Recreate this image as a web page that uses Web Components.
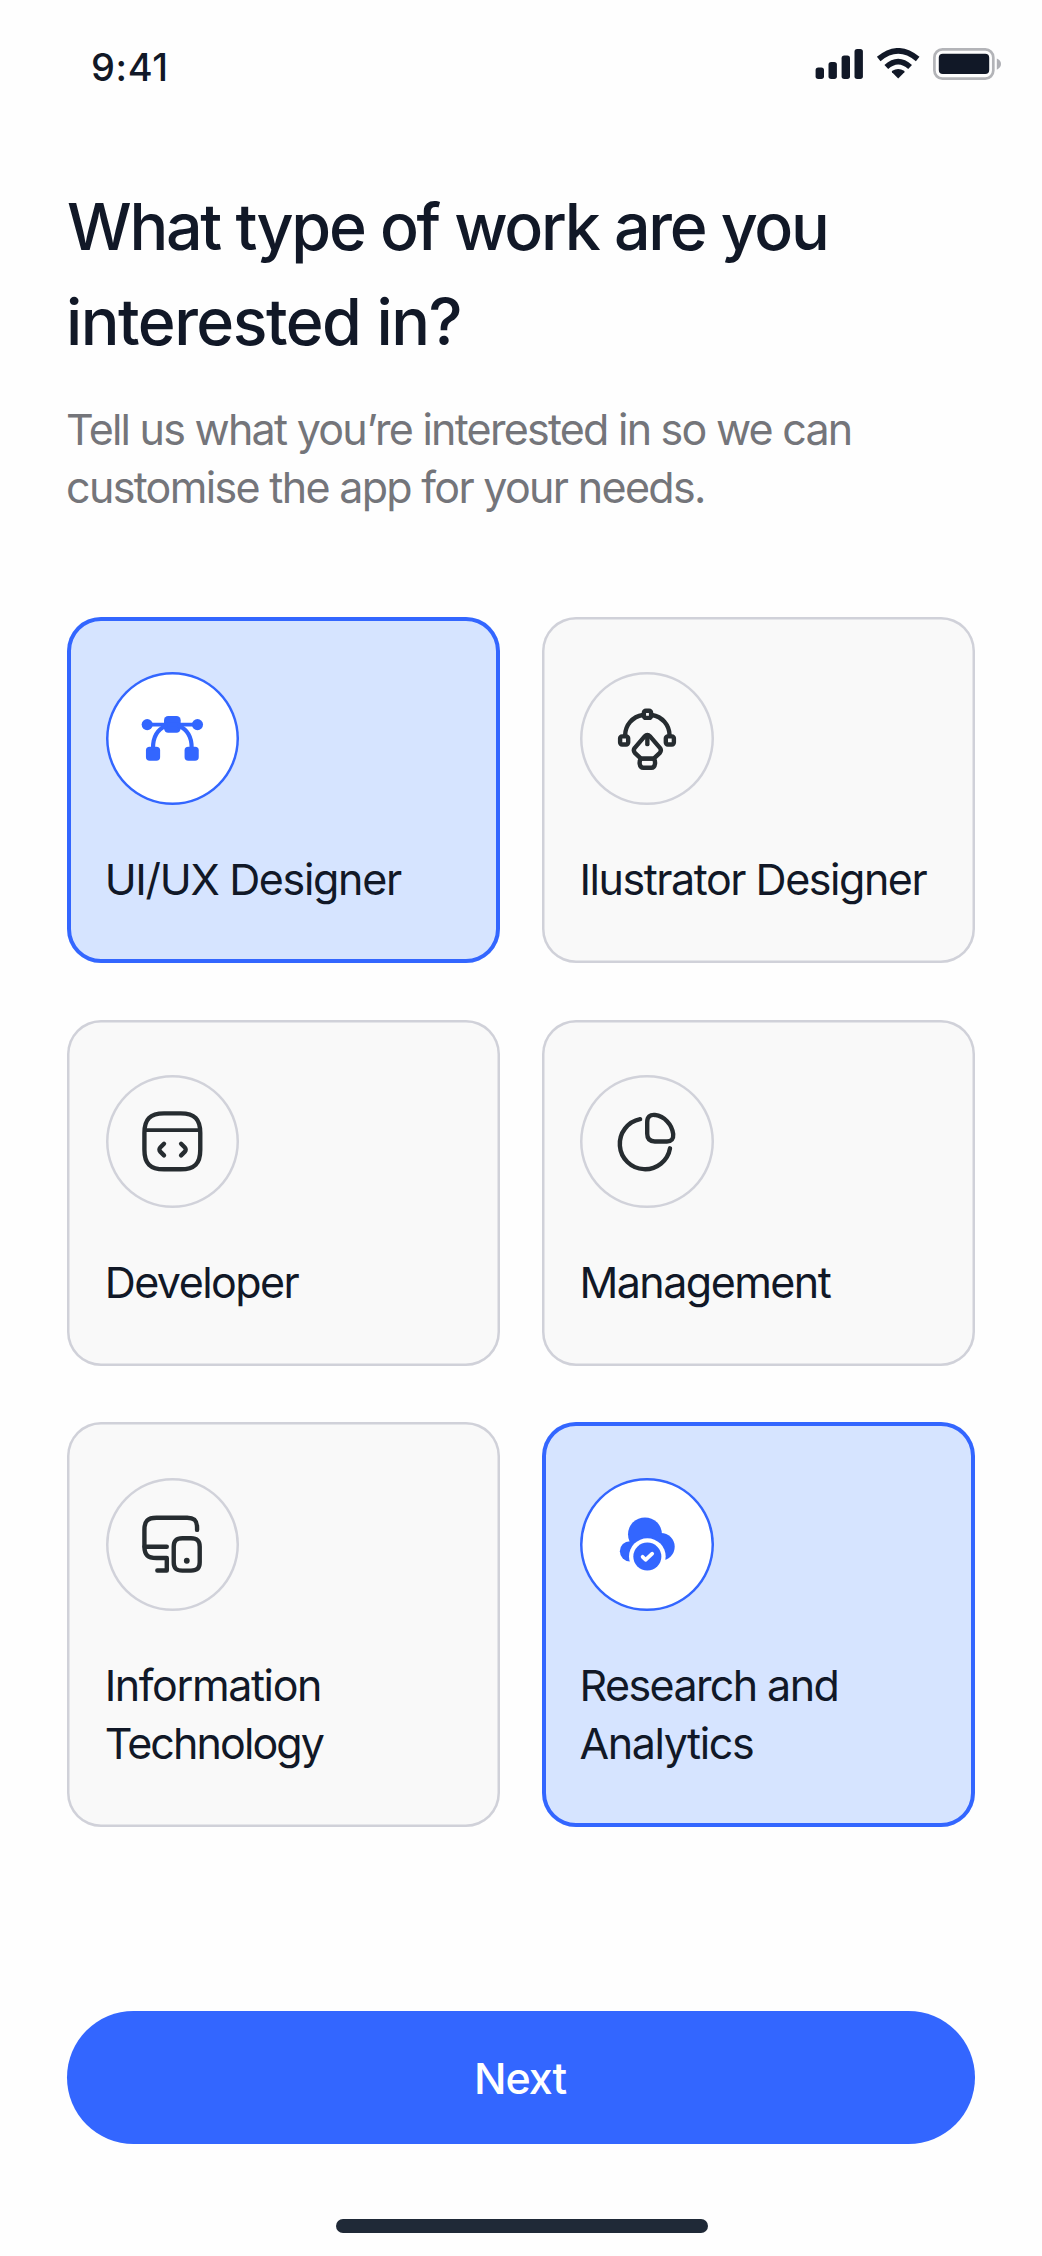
<!DOCTYPE html>
<html lang="en">
<head>
<meta charset="utf-8">
<title>Choose your interests</title>
<style>
  html, body { margin: 0; background: #fefefe; }
  body { font-family: Inter, "Liberation Sans", sans-serif; color: #111827; width: 1042px; }
</style>
</head>
<body>
<interest-screen></interest-screen>

<script>
const define = (name, markup, setup) => {
  const template = document.createElement('template');
  template.innerHTML = markup;
  customElements.define(name, class extends HTMLElement {
    constructor() {
      super();
      this.attachShadow({ mode: 'open' }).append(template.content.cloneNode(true));
    }
    connectedCallback() { if (setup) setup(this, this.shadowRoot); }
  });
};

/* Icons on a 24-unit grid */
const ICONS = {
  bezier: `<g fill="currentColor" stroke="none">
      <rect x="9" y="4" width="6" height="6" rx="1.5"/>
      <circle cx="2.95" cy="7.05" r="2"/><circle cx="21.05" cy="7.05" r="2"/>
      <rect x="2.5" y="15" width="5.1" height="5.1" rx="1.35"/>
      <rect x="16.4" y="15" width="5.1" height="5.1" rx="1.35"/></g>
    <path d="M3 7.05h18" stroke-width="1.4"/>
    <path d="M5.05 15.5C5 11.8 6.3 9 9.6 7.5M18.95 15.5C19 11.8 17.7 9 14.4 7.5" stroke-width="1.5"/>`,
  pen: `<rect x="10.75" y="2.05" width="2.6" height="2.6" rx=".7"/>
    <rect x="2.2" y="11.3" width="2.9" height="2.9" rx=".7"/>
    <rect x="18.65" y="11.3" width="2.9" height="2.9" rx=".7"/>
    <path d="M10.4 3.6C6.6 4.2 4.1 7.2 4 10.9M13.6 3.6c3.8.6 6.3 3.6 6.4 7.3"/>
    <path d="M9.7 19.3 7.5 17.2c-.5-.6-.5-1.1-.1-1.7l3.7-4.3c.55-.6 1.25-.6 1.8 0l3.7 4.3c.4.6.4 1.1-.1 1.7l-2.2 2.1z"/>
    <path d="M9.7 19.3h4.6c.45.6.55 1.2.45 1.9-.15 1-.5 1.4-1.3 1.4h-2.9c-.8 0-1.15-.4-1.3-1.4-.1-.7 0-1.3.45-1.9z"/>
    <path d="M12 11.3v2.8"/>`,
  code: `<path d="M9 22.05h6c5 0 7.05-2.05 7.05-7.05V9c0-5-2.05-7.05-7.05-7.05H9C4 1.95 1.95 4 1.95 9v6c0 5 2.05 7.05 7.05 7.05z"/>
    <path d="M2.1 7.95h19.8" stroke-width="1.4"/>
    <path d="m9 12.85-1.35 1.35c-.4.4-.4 1.1 0 1.5L9 17.05M15.15 12.85l1.35 1.35c.4.4.4 1.1 0 1.5l-1.35 1.35"/>`,
  chart: `<path d="M11.95 5.1c0-1.95 1-2.75 2.75-2.6 3.5.5 6.2 3.4 6.6 6.9.15 1.8-.65 2.65-2.25 2.65H14.7c-1.85 0-2.75-.9-2.75-2.75z"/>
    <path d="M9.4 4a9.1 9.1 0 1 0 10.75 10.5"/>`,
  devices: `<path d="M20.9 6.8V6c0-2.6-1-3.55-3.55-3.55H6.3C3.1 2.45 1.95 3.6 1.95 6.8v5.8c0 3.2 1.15 4.3 4.35 4.3H10v4.5H6.6"/>
    <path d="M2 12.85h8"/>
    <path d="M15.6 21.45h3.1c2.2 0 3.15-.8 3.15-3v-5.6c0-2.2-.95-3.05-3.15-3.05h-3.1c-2.2 0-3.1.85-3.1 3.05v5.6c0 2.2.9 3 3.1 3z"/>
    <circle cx="17.2" cy="17.9" r="1.05" fill="currentColor" stroke="none"/>`,
  cloud: `<g fill="currentColor" stroke="none">
      <circle cx="11.15" cy="8.4" r="6.1"/><circle cx="5.75" cy="14.5" r="3.65"/><circle cx="16.9" cy="12.9" r="4.95"/></g>
    <circle cx="12" cy="16.4" r="6.6" fill="#fff" stroke="none"/>
    <circle cx="12" cy="16.4" r="5.05" fill="currentColor" stroke="none"/>
    <path d="m10.3 16.5 1.05 1.05 2.4-2.2" stroke="#fff" stroke-width="1.35"/>`
};

define('status-bar', `
  <style>
    :host { display: flex; justify-content: space-between; align-items: flex-start; padding: 43px 41px 0 91px; height: 52px; }
    time { font-size: 38px; line-height: 48px; font-weight: 500; letter-spacing: .6px; }
    svg { display: block; margin-top: 5px; }
  </style>
  <time>9:41</time>
  <svg width="186" height="32" viewBox="815 48 186 32">
    <g fill="#111827">
      <rect x="815.6" y="67.4" width="8.4" height="11.6" rx="2.7"/>
      <rect x="828.5" y="62" width="8.4" height="17" rx="2.7"/>
      <rect x="841.6" y="55.5" width="8.4" height="23.5" rx="2.7"/>
      <rect x="854.5" y="49" width="8.4" height="30" rx="2.7"/>
      <path d="M898.2 78.4 892 72.2Q891.4 71.4 892.3 70.8Q898.2 67 904.1 70.8Q905 71.4 904.4 72.2Z"/>
      <rect x="938.8" y="53.7" width="50.4" height="20.4" rx="4"/>
    </g>
    <path d="M886.3 67Q898.2 56.3 910.1 67" fill="none" stroke="#111827" stroke-width="5.6"/>
    <path d="M878.7 59Q898.2 42.7 917.7 59" fill="none" stroke="#111827" stroke-width="5.6"/>
    <rect x="934.4" y="49.4" width="58.9" height="29.2" rx="8" fill="none" stroke="#b3b4b8" stroke-width="2.7"/>
    <path d="M996.8 58.5q4.2 1.7 4.2 5.6t-4.2 5.6z" fill="#b0b1b6"/>
  </svg>`);

define('screen-heading', `
  <style>
    :host { display: flex; flex-direction: column; gap: 31px; }
    h1, p { margin: 0; white-space: nowrap; }
    h1 { font-size: 64.5px; line-height: 94.4px; font-weight: 500; letter-spacing: -2.25px; word-spacing: .4px; }
    h1 span + span { letter-spacing: -1.53px; margin-left: -1px; }
    p { font-size: 43px; line-height: 58.35px; color: #74757a; letter-spacing: -1.68px; margin-left: -1px; }
    p span:first-child { letter-spacing: -1.76px; }
    span { display: block; }
  </style>
  <h1><span>What type of work are you</span><span>interested in?</span></h1>
  <p><span>Tell us what you’re interested in so we can</span><span>customise the app for your needs.</span></p>`);

define('icon-badge', `
  <style>
    :host { display: grid; place-items: center; width: 133.4px; height: 133.4px;
      border-radius: 50%; box-shadow: inset 0 0 0 2.5px var(--ring); background: var(--badge); color: var(--icon); }
    svg { display: block; overflow: visible; }
  </style>
  <svg width="66.7" height="66.7" viewBox="0 0 24 24" fill="none" stroke="currentColor"
    stroke-width="1.58" stroke-linecap="round" stroke-linejoin="round"></svg>`,
  (host, root) => { root.querySelector('svg').innerHTML = ICONS[host.getAttribute('name')]; });

define('interest-card', `
  <style>
    :host { --ring: #d1d2da; --badge: transparent; --icon: #262c30;
      display: flex; flex-direction: column; gap: 44.3px; box-sizing: border-box;
      padding: 55.4px 20px 55.2px 38.7px; border-radius: 34px;
      background: #f9f9f9; box-shadow: inset 0 0 0 2.5px #d0d1d9; }
    :host([selected]) { --ring: #3366ff; --badge: #fff; --icon: #3366ff;
      background: #d6e4ff; box-shadow: inset 0 0 0 4px #3366ff; }
    .label { font-size: 43px; line-height: 58.35px; white-space: nowrap; margin-left: -1px; }
  </style>
  <div class="badge"></div>
  <div class="label"><slot></slot></div>`,
  (host, root) => {
    root.querySelector('.badge').innerHTML = `<icon-badge name="${host.getAttribute('icon')}"></icon-badge>`;
  });

define('primary-button', `
  <style>
    :host { display: block; }
    button { display: flex; align-items: center; justify-content: center; width: 100%; height: 133.4px; padding: 0 2px 0 0;
      border: 0; border-radius: 67px; background: #3366ff; color: #fff;
      font: 500 43px/58px Inter, "Liberation Sans", sans-serif; letter-spacing: -1px; }
  </style>
  <button><slot></slot></button>`);

define('home-indicator', `
  <style>:host { display: block; width: 372px; height: 14px; border-radius: 7px; background: #1f2937; }</style>`);

define('interest-screen', `
  <style>
    :host { display: flex; flex-direction: column; height: 2256px; box-sizing: border-box; overflow: hidden; }
    main { display: flex; flex-direction: column; padding: 85.2px 67px 0; }
    .grid { display: grid; grid-template-columns: 1fr 1fr; column-gap: 41.6px; row-gap: 56.35px; margin-top: 99.9px; }
    .grid span { display: block; }
    primary-button { margin-top: 183.5px; }
    home-indicator { margin: 74.8px auto 0; transform: translateX(1px); }
  </style>
  <status-bar></status-bar>
  <main>
    <screen-heading></screen-heading>
    <div class="grid">
      <interest-card icon="bezier" selected><span style="letter-spacing:-1.33px">UI/UX Designer</span></interest-card>
      <interest-card icon="pen"><span style="letter-spacing:-1.46px">Ilustrator Designer</span></interest-card>
      <interest-card icon="code"><span style="letter-spacing:-1.55px">Developer</span></interest-card>
      <interest-card icon="chart"><span style="letter-spacing:-1.55px">Management</span></interest-card>
      <interest-card icon="devices"><span style="letter-spacing:-1.4px">Information</span><span style="letter-spacing:-1.9px">Technology</span></interest-card>
      <interest-card icon="cloud" selected><span style="letter-spacing:-1.6px">Research and</span><span style="letter-spacing:-1.4px">Analytics</span></interest-card>
    </div>
    <primary-button>Next</primary-button>
  </main>
  <home-indicator></home-indicator>`);
</script>
</body>
</html>
